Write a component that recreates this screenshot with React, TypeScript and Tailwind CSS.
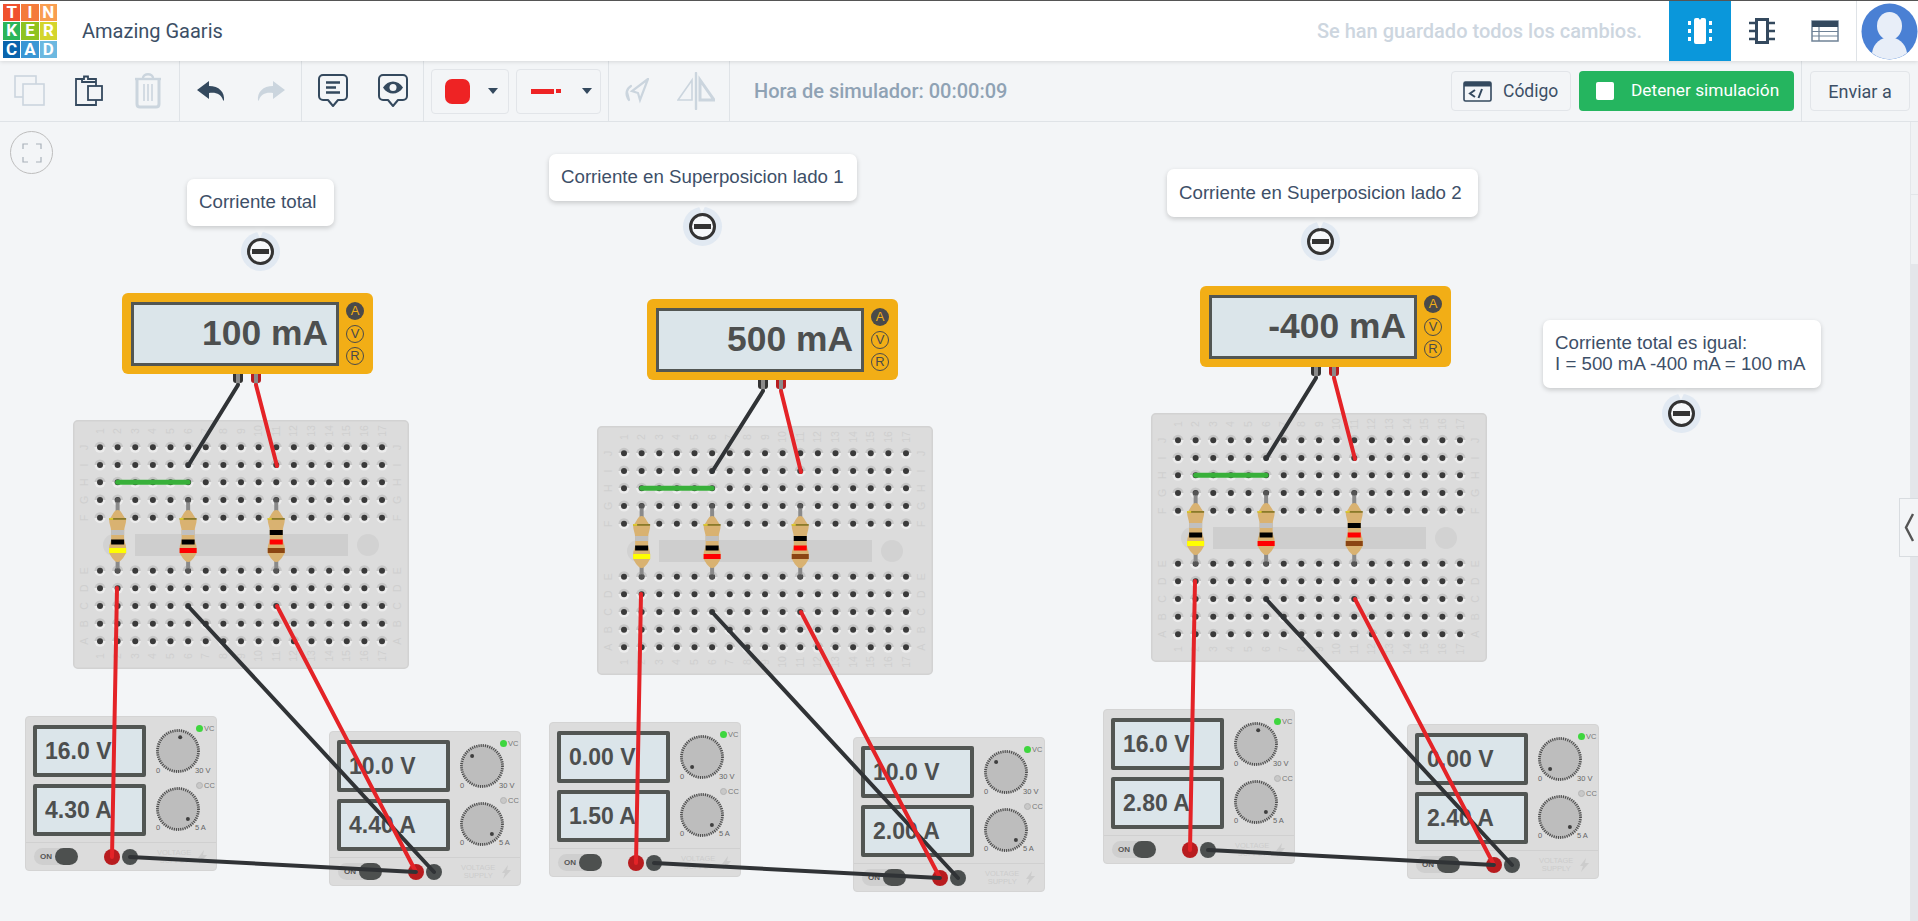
const CANVAS_TOP = 122;
const at = (x: number, y: number) => ({ left: x, top: y - CANVAS_TOP });

const ICON = "#34495e";
const OFF = "#cbd5de";

const LOGO = [
  ["T", "#f0512e"],
  ["I", "#f47b3a"],
  ["N", "#f99e50"],
  ["K", "#2bb559"],
  ["E", "#8fc31f"],
  ["R", "#d4d52c"],
  ["C", "#0a64ad"],
  ["A", "#3a96d4"],
  ["D", "#6cb8e0"],
];

function Logo() {
  return (
    <div className="grid grid-cols-3 gap-px w-[54px] h-[54px]">
      {LOGO.map(([l, c]) => (
        <div
          key={l + c}
          className="flex items-center justify-center text-white font-bold text-[17px] leading-none"
          style={{ background: c }}
        >
          {l}
        </div>
      ))}
    </div>
  );
}

function Bubble({ children }: { children: React.ReactNode }) {
  return (
    <svg width="30" height="34" viewBox="0 0 30 34" fill="none">
      <path
        d="M5 1h20a4 4 0 0 1 4 4v17a4 4 0 0 1-4 4h-5l-5 6-5-6H5a4 4 0 0 1-4-4V5a4 4 0 0 1 4-4z"
        stroke={ICON}
        strokeWidth="2"
        strokeLinejoin="round"
      />
      {children}
    </svg>
  );
}

function Toolbar() {
  return (
    <div className="h-[61px] flex items-stretch border-b border-[#dfe3e7] bg-[#f3f5f7] shrink-0">
      <div className="w-[180px] flex items-center border-r border-[#dfe3e7] shrink-0">
        <div className="w-[60px] flex justify-center">
          <svg width="32" height="32" viewBox="0 0 32 32" fill="none" stroke={OFF} strokeWidth="1.6">
            <rect x="1" y="1" width="21" height="21" />
            <rect x="9" y="9" width="21" height="21" fill="#f3f5f7" />
          </svg>
        </div>
        <div className="w-[58px] flex justify-center">
          <svg width="28" height="32" viewBox="0 0 28 32" fill="none" stroke={ICON} strokeWidth="1.8">
            <path d="M7 4H1v26h20V8" />
            <path d="M7 4h2V1.500h4V4h8v3H7z" />
            <rect x="13" y="11" width="14" height="14" fill="#f3f5f7" />
          </svg>
        </div>
        <div className="w-[62px] flex justify-center">
          <svg width="28" height="36" viewBox="0 0 28 36" fill="none" stroke={OFF} strokeWidth="2.4">
            <path d="M1 6h26" />
            <path d="M9 5c0-5 10-5 10 0" />
            <path d="M3 7v24c0 2 1 3 3 3h16c2 0 3-1 3-3V7" strokeWidth="3" />
            <path d="M10 11v17M14 11v17M18 11v17" strokeWidth="1.6" />
          </svg>
        </div>
      </div>
      <div className="w-[122px] flex items-center border-r border-[#dfe3e7] shrink-0 pl-[1px]">
        <div className="w-[60px] flex justify-center">
          <svg width="28" height="20" viewBox="0 0 28 20" fill={ICON}>
            <path d="M12 0 0 9l12 9v-6c7-1 12 1 14 7l1 1c1-9-5-15-15-15z" />
          </svg>
        </div>
        <div className="w-[60px] flex justify-center">
          <svg width="28" height="20" viewBox="0 0 28 20" fill={OFF}>
            <path d="M16 0l12 9-12 9v-6C9 11 4 13 2 19l-1 1C0 11 6 5 16 5z" />
          </svg>
        </div>
      </div>
      <div className="w-[122px] flex items-center border-r border-[#dfe3e7] shrink-0 pl-[1px]">
        <div className="w-[60px] flex justify-center">
          <Bubble>
            <path d="M8 8.500h14M8 13.500h10M8 18.500h14" stroke={ICON} strokeWidth="2.600" />
          </Bubble>
        </div>
        <div className="w-[60px] flex justify-center">
          <Bubble>
            <path d="M5 13.500c5-8 15-8 20 0-5 8-15 8-20 0z" fill={ICON} />
            <circle cx="15" cy="13.500" r="3.500" fill="#f3f5f7" />
          </Bubble>
        </div>
      </div>
      <div className="w-[185px] flex items-center gap-[7px] pl-[7px] border-r border-[#dfe3e7] shrink-0">
        <div className="w-[78px] h-[45px] border border-[#e2e5e9] rounded-[4px] flex items-center pl-[13px] gap-[18px]">
          <div className="w-[25px] h-[25px] rounded-[7px] bg-[#ee2324]" />
          <div className="w-0 h-0 border-x-[5px] border-x-transparent border-t-[6px] border-t-[#34495e]" />
        </div>
        <div className="w-[85px] h-[45px] border border-[#e2e5e9] rounded-[4px] flex items-center pl-[14px]">
          <div className="w-[23px] h-[5px] bg-[#ee2324]" />
          <div className="w-[5px] h-[4px] bg-[#ee2324] ml-[2px]" />
          <div className="ml-[21px] w-0 h-0 border-x-[5px] border-x-transparent border-t-[6px] border-t-[#34495e]" />
        </div>
      </div>
      <div className="w-[121px] flex items-center border-r border-[#dfe3e7] shrink-0">
        <div className="w-[56px] flex justify-center">
          <svg width="26" height="26" viewBox="0 0 26 26" fill="none" stroke={OFF} strokeWidth="2.200">
            <path d="M25 1 9 13l6 2 2 7z" />
            <path d="M8 8c-5 3-6 9-2 14M4 14l2 8M1 16" strokeLinecap="round" />
          </svg>
        </div>
        <div className="w-[70px] flex justify-center">
          <svg width="38" height="38" viewBox="0 0 38 38" fill="none" stroke={OFF} strokeWidth="1.600">
            <path d="M19 1v36" strokeWidth="2.400" strokeLinecap="round" />
            <path d="M15 8v20H1z" />
            <path d="M23 8v20h14z" strokeWidth="3" />
          </svg>
        </div>
      </div>
      <div className="pl-[24px] flex items-center text-[20px] font-medium text-[#8fa2b4] whitespace-nowrap">
        Hora de simulador: 00:00:09
      </div>
      <div className="flex-1" />
      <div className="flex items-center gap-[8px] pr-[7px] border-r border-[#dfe3e7]">
        <div className="w-[120px] h-[40px] border border-[#e2e5e9] rounded-[4px] flex items-center pl-[11px] gap-[11px] text-[17.500px] text-[#3c4f66]">
          <svg width="29" height="21" viewBox="0 0 29 21" fill="none">
            <rect x="1" y="1" width="27" height="19" rx="1.500" stroke={ICON} strokeWidth="1.600" />
            <rect x="1" y="1" width="27" height="4.500" fill={ICON} />
            <path d="M12 9l-5 3.500 5 3.500M19 8l-3.500 9" stroke={ICON} strokeWidth="2" />
          </svg>
          Código
        </div>
        <div className="w-[215px] h-[40px] rounded-[4px] bg-[#25b55f] flex items-center pl-[17px] gap-[17px] text-[17.300px] text-white whitespace-nowrap">
          <div className="w-[18px] h-[18px] rounded-[2px] bg-white" />
          Detener simulación
        </div>
      </div>
      <div className="w-[116px] flex items-center pl-[8px]">
        <div className="w-[100px] h-[40px] border border-[#e2e5e9] rounded-[4px] flex items-center justify-center text-[18px] text-[#3c4f66]">
          Enviar a
        </div>
      </div>
    </div>
  );
}

function Header() {
  return (
    <div className="relative z-10 h-[61px] border-t border-[#555] bg-white flex items-center shadow-[0_1px_4px_rgba(0,0,0,0.12)] shrink-0">
      <div className="ml-[3px]">
        <Logo />
      </div>
      <div className="ml-[25px] text-[20px] text-[#3c4f66] whitespace-nowrap">Amazing Gaaris</div>
      <div className="flex-1" />
      <div className="text-[20px] font-medium text-[#cdd6df] whitespace-nowrap mr-[27px]">
        Se han guardado todos los cambios.
      </div>
      <div className="w-[62px] h-full bg-[#0a97db] flex items-center justify-center">
        <svg width="26" height="28" viewBox="0 0 26 28" fill="#fff">
          <path d="M7 3a2 2 0 0 1 2-2h2.500l1 1.500h1L14.500 1H17a2 2 0 0 1 2 2v22a2 2 0 0 1-2 2H9a2 2 0 0 1-2-2z" />
          <path d="M1 4h3v4H1zM1 12h3v4H1zM1 20h3v4H1zM22 4h3v4h-3zM22 12h3v4h-3zM22 20h3v4h-3z" />
        </svg>
      </div>
      <div className="w-[62px] h-full flex items-center justify-center">
        <svg width="26" height="26" viewBox="0 0 26 26" fill="none" stroke={ICON}>
          <rect x="7.500" y="1.500" width="11" height="23" strokeWidth="3" />
          <path d="M0 5h6M0 13h6M0 21h6M20 5h6M20 13h6M20 21h6" strokeWidth="2.400" />
        </svg>
      </div>
      <div className="w-[63px] h-full flex items-center justify-center">
        <svg width="28" height="22" viewBox="0 0 28 22" fill="none">
          <rect x="1" y="1" width="26" height="20" stroke="#6f8296" strokeWidth="1.500" />
          <rect x="1" y="1" width="26" height="6" fill={ICON} />
          <path d="M1 11.500h26M1 16h26M8 7v14" stroke="#6f8296" strokeWidth="1.200" />
        </svg>
      </div>
      <div className="h-full w-[62px] border-l border-[#dfe3e7] flex items-center justify-end">
        <svg width="57" height="57" viewBox="0 0 57 57">
          <circle cx="28.500" cy="28.500" r="28" fill="#4a80d4" />
          <ellipse cx="28.500" cy="23" rx="12.500" ry="14" fill="#e8eef8" />
          <path d="M11 50c3-21 32-21 35 0a28 28 0 0 1-35 0z" fill="#e8eef8" />
        </svg>
      </div>
    </div>
  );
}

function Note({
  x,
  y,
  w,
  h,
  mx,
  my,
  lines,
}: {
  x: number;
  y: number;
  w: number;
  h: number;
  mx: number;
  my: number;
  lines: string[];
}) {
  return (
    <>
      <div
        className="absolute w-[39px] h-[39px] rounded-full bg-[#e1e9f2] flex items-center justify-center"
        style={at(mx - 19.5, my - 19.5)}
      >
        <div className="w-[27px] h-[27px] rounded-full border-[3px] border-[#333] flex items-center justify-center bg-[#f6f8fa]">
          <div className="w-[17px] h-[5px] bg-[#333]" />
        </div>
      </div>
      <div
        className="absolute w-0 h-0 border-x-[6px] border-x-transparent border-t-[13px] border-t-[#f4f6f8]"
        style={at(mx - 6, y + h - 1)}
      />
      <div
        className="absolute bg-white rounded-[7px] shadow-[0_2px_5px_rgba(0,0,0,0.18)] flex flex-col justify-center pl-[12px] pb-[2px] text-[18.700px] leading-[21px] text-[#3d4f68] whitespace-nowrap font-['Liberation_Sans',sans-serif]"
        style={{ ...at(x, y), width: w, height: h }}
      >
        {lines.map((l) => (
          <div key={l}>{l}</div>
        ))}
      </div>
    </>
  );
}

function Multimeter({ x, y, value }: { x: number; y: number; value: string }) {
  return (
    <div
      className="absolute w-[251px] h-[92px] font-['Liberation_Sans',sans-serif]"
      style={at(x, y)}
    >
      <div className="w-[251px] h-[81px] bg-[#f2ae16] rounded-[6px] p-[9px] flex gap-[7px]">
        <div className="w-[210px] h-[64px] border-[3.500px] border-[#525653] bg-[#dbe5ea] flex items-center justify-end pr-[8px] text-[35.400px] font-bold text-[#4d4f4f] whitespace-nowrap">
          {value}
        </div>
        <div className="flex flex-col items-center gap-[4px]">
          <div className="w-[18px] h-[18px] rounded-full bg-[#4a4a4a] text-[#f2ae16] text-[13px] flex items-center justify-center">
            A
          </div>
          <div className="w-[18px] h-[18px] mt-[1px] rounded-full border-[1.500px] border-[#4a4a4a] text-[#4a4a4a] text-[13px] flex items-center justify-center">
            V
          </div>
          <div className="w-[18px] h-[18px] rounded-full border-[1.500px] border-[#4a4a4a] text-[#4a4a4a] text-[13px] flex items-center justify-center">
            R
          </div>
        </div>
      </div>
      <div className="flex ml-[111px] gap-[8px]">
        <div className="w-[10px] h-[9px] rounded-b-[3px] bg-[#333]" />
        <div className="w-[10px] h-[9px] rounded-b-[3px] bg-[#b81c1f]" />
      </div>
    </div>
  );
}

const COLS = Array.from({ length: 17 }, (_, i) => 27 + 17.625 * i);
const TOP_ROWS = [27.3, 45, 62.3, 80, 97.7];
const BOTTOM_ROWS = [150.7, 168.3, 186, 203.7, 221.3];
const ROW_LABELS = ["J", "I", "H", "G", "F", "E", "D", "C", "B", "A"];

function Resistor({ col, bands }: { col: number; bands: [string, string, string] }) {
  const cx = COLS[col];
  return (
    <g transform={`translate(${cx} 0)`}>
      <path d="M0 80V151" stroke="#8a8a8a" strokeWidth="4" />
      <circle cy="80" r="2.500" fill="#555" />
      <circle cy="150.700" r="2.500" fill="#555" />
      <path
        d="M0 90c3 0 4 3 6 6l2.500 4c0 4-2 7-2 11v8c0 3 2 5 2 9v5l-3 5c-2 2-3 4-5.500 4s-3.500-2-5.500-4l-3-5v-5c0-4 2-6 2-9v-8c0-4-2-7-2-11l2.500-4c2-3 3-6 6-6z"
        fill="#d9b271"
      />
      <rect x="-8.500" y="98" width="17" height="1.800" fill="#8a7a2a" />
      <rect x="-8.500" y="98" width="4" height="1.800" fill="#e0cc30" />
      <rect x="-6.500" y="110" width="13" height="5" fill={bands[0]} />
      <rect x="-6.500" y="119.500" width="13" height="5" fill={bands[1]} />
      <rect x="-8.500" y="128" width="17" height="5" fill={bands[2]} />
    </g>
  );
}

function Breadboard({ x, y, id }: { x: number; y: number; id: string }) {
  return (
    <svg className="absolute" style={at(x, y)} width="336" height="249" viewBox="0 0 336 249">
      <defs>
        <linearGradient id={id} x1="0" y1="0" x2="0" y2="1">
          <stop offset="0.500" stopColor="#c6c6c6" />
          <stop offset="0.500" stopColor="#ececec" />
        </linearGradient>
      </defs>
      <rect x="0.750" y="0.750" width="334.500" height="247.500" rx="4" fill="#dcdcdc" stroke="#d2d2d2" strokeWidth="1.500" />
      <rect x="62" y="114" width="213" height="22" fill="#cecece" />
      <circle cx="41" cy="125" r="11" fill="#d2d2d2" />
      <circle cx="295" cy="125" r="11" fill="#d2d2d2" />
      {[...TOP_ROWS, ...BOTTOM_ROWS].flatMap((ry) =>
        COLS.map((cx) => (
          <g key={`${cx}-${ry}`}>
            <circle cx={cx} cy={ry} r="5.500" fill={`url(#${id})`} />
            <circle cx={cx} cy={ry} r="3" fill="#3a3a3a" />
          </g>
        )),
      )}
      <g fill="#cfcfcf" fontSize="10.500" textAnchor="middle" fontFamily="'Liberation Sans', sans-serif">
        {COLS.map((cx, i) => (
          <g key={cx}>
            <text transform={`translate(${cx + 3.500} 11) rotate(-90)`}>{i + 1}</text>
            <text transform={`translate(${cx + 3.500} 236) rotate(-90)`}>{i + 1}</text>
          </g>
        ))}
        {[...TOP_ROWS, ...BOTTOM_ROWS].map((ry, i) => (
          <g key={ry}>
            <text transform={`translate(15 ${ry}) rotate(-90)`}>{ROW_LABELS[i]}</text>
            <text transform={`translate(328 ${ry}) rotate(-90)`}>{ROW_LABELS[i]}</text>
          </g>
        ))}
      </g>
      <path d={`M${COLS[1]} 62.300H${COLS[5]}`} stroke="#38b03a" strokeWidth="5" strokeLinecap="round" />
      <Resistor col={1} bands={["#c0c0c0", "#000", "#ffff00"]} />
      <Resistor col={5} bands={["#c0c0c0", "#000", "#ff0000"]} />
      <Resistor col={10} bands={["#000", "#ff0000", "#8b4513"]} />
    </svg>
  );
}

function Knob({ angle, top, maxLabel }: { angle: number; top: boolean; maxLabel: string }) {
  const rad = (angle * Math.PI) / 180;
  const dotX = 24 + 14 * Math.sin(rad);
  const dotY = 24 - 14 * Math.cos(rad);
  return (
    <div className="relative w-[60px] h-[60px]">
      <svg className="absolute left-0 top-0" width="48" height="48" viewBox="0 0 48 48">
        <circle cx="24" cy="24" r="21.500" fill="#bdbdbd" />
        <circle cx="24" cy="24" r="20.500" fill="none" stroke="#4c4c4c" strokeWidth="2.800" strokeDasharray="1.100 1.100" />
        <circle cx={dotX} cy={dotY} r="2" fill="#3f3f3f" />
      </svg>
      <span
        className={`absolute left-[2px] text-[7.500px] leading-none text-[#666] ${top ? "top-[40px]" : "top-[39px]"}`}
      >
        0
      </span>
      <span
        className={`absolute text-[7.500px] leading-none text-[#666] ${top ? "top-[40px] left-[41px]" : "top-[39px] left-[41px]"}`}
      >
        {maxLabel}
      </span>
      <span
        className={`absolute left-[42px] w-[7px] h-[7px] rounded-full ${top ? "top-[-2px] bg-[#3ed63e]" : "top-[-3px] bg-[#c8c8c8] border border-[#b5b5b5]"}`}
      />
      <span
        className={`absolute left-[50px] text-[7.500px] leading-none text-[#777] ${top ? "top-[-2px]" : "top-[-3px]"}`}
      >
        {top ? "VC" : "CC"}
      </span>
    </div>
  );
}

function SupplyDisplay({ value }: { value: string }) {
  return (
    <div className="w-[113px] h-[52px] rounded-[2px] border-[4px] border-[#525653] bg-[#dbe5ea] flex items-center pl-[8px] text-[23px] font-bold text-[#4d4f4f] whitespace-nowrap">
      {value}
    </div>
  );
}

function Supply({
  x,
  y,
  volts,
  amps,
}: {
  x: number;
  y: number;
  volts: string;
  amps: string;
}) {
  const angle = -135 + (270 * parseFloat(volts)) / 30;
  return (
    <div
      className="absolute w-[192px] h-[155px] bg-[#dcdcdc] border border-[#d4d4d4] rounded-[4px] font-['Liberation_Sans',sans-serif] flex flex-col"
      style={at(x, y)}
    >
      <div className="h-[126px] flex pl-[7px] pt-[8px] gap-[8px] border-b-[1.500px] border-[#d0d0d0]">
        <div className="flex flex-col gap-[7px]">
          <SupplyDisplay value={volts} />
          <SupplyDisplay value={amps} />
        </div>
        <div className="flex flex-col pt-[2px]">
          <Knob angle={angle} top maxLabel="30 V" />
          <Knob angle={135} top={false} maxLabel="5 A" />
        </div>
      </div>
      <div className="flex-1 relative flex items-center pl-[8px]">
        <div className="w-[44px] h-[17px] rounded-full bg-[#cfcfcf] flex items-center justify-between pl-[6px]">
          <span className="text-[8px] font-bold text-[#555]">ON</span>
          <div className="w-[23px] h-[17px] rounded-full bg-[#4d504f]" />
        </div>
        <div className="ml-[26px] w-[16px] h-[16px] rounded-full bg-[#b81c1f]" />
        <div className="ml-[2px] w-[16px] h-[16px] rounded-full bg-[#4b4f4f]" />
        <div className="ml-[19px] text-[7.500px] leading-[8px] text-center text-[#cccccc]">
          VOLTAGE
          <br />
          SUPPLY
        </div>
        <svg className="ml-[7px]" width="9" height="14" viewBox="0 0 9 14" fill="#cccccc">
          <path d="M6 0 0 8h3l-2 6 8-9H5z" />
        </svg>
      </div>
    </div>
  );
}

interface Circuit {
  mm: [number, number];
  bb: [number, number];
  a: [number, number];
  b: [number, number];
  value: string;
  aV: string;
  aA: string;
  bV: string;
  bA: string;
}

const CIRCUITS: Circuit[] = [
  { mm: [122, 293], bb: [73, 420], a: [25, 716], b: [329, 731], value: "100 mA", aV: "16.0 V", aA: "4.30 A", bV: "10.0 V", bA: "4.40 A" },
  { mm: [647, 299], bb: [597, 426], a: [549, 722], b: [853, 737], value: "500 mA", aV: "0.00 V", aA: "1.50 A", bV: "10.0 V", bA: "2.00 A" },
  { mm: [1200, 286], bb: [1151, 413], a: [1103, 709], b: [1407, 724], value: "-400 mA", aV: "16.0 V", aA: "2.80 A", bV: "0.00 V", bA: "2.40 A" },
];

const RED = "#e42327";
const BLACK = "#303336";

function Wires({ c }: { c: Circuit }) {
  const [mx, my] = c.mm;
  const [bx, by] = c.bb;
  const [ax, ay] = c.a;
  const [sx, sy] = c.b;
  const wires: [number, number, number, number, string][] = [
    [mx + 116, my + 92, bx + 115, by + 46, BLACK],
    [mx + 134, my + 92, bx + 204, by + 46, RED],
    [bx + 44, by + 168, ax + 87, ay + 141, RED],
    [bx + 115, by + 186, sx + 105, sy + 141, BLACK],
    [bx + 204, by + 186, sx + 87, sy + 141, RED],
    [ax + 105, ay + 141, sx + 87, sy + 141, BLACK],
  ];
  return (
    <>
      <path d={`M${mx + 116} ${my + 81}V${my + 92}M${mx + 134} ${my + 81}V${my + 92}`} stroke="#8a8a8a" strokeWidth="4" />
      {wires.map(([x1, y1, x2, y2, color]) => (
        <line key={`${x1}-${y1}-${x2}`} x1={x1} y1={y1} x2={x2} y2={y2} stroke={color} strokeWidth="4" strokeLinecap="round" />
      ))}
    </>
  );
}

export default function App() {
  return (
    <div className="h-screen w-full overflow-hidden flex flex-col bg-[#f3f5f7] font-['Roboto',sans-serif]">
      <Header />
      <Toolbar />
      <div className="relative flex-1 overflow-hidden">
        {/* right rail */}
        <div className="absolute right-0 top-0 bottom-0 w-[8px] border-l border-[#e4e7ea] bg-[#f0f2f4]">
          <div className="absolute left-0 right-0 top-[72px] h-[70px] border-t border-[#e2e5e8]" />
          <div className="absolute left-0 right-0 top-[142px] bottom-0 bg-[#e4e6ea]" />
        </div>
        <div className="absolute right-0 top-[376px] w-[19px] h-[59px] bg-[#f3f5f7] border border-[#d8dce0] border-r-0 flex items-center justify-center">
          <svg width="11" height="29" viewBox="0 0 11 29" fill="none" stroke="#555" strokeWidth="2.400">
            <path d="M9 1 2 14.500 9 28" />
          </svg>
        </div>
        <div className="absolute left-[10px] top-[9px] w-[43px] h-[43px] rounded-full border border-[#bdbdbd] flex items-center justify-center">
          <svg width="20" height="20" viewBox="0 0 20 20" fill="none" stroke="#a9b1b9" strokeWidth="1.200">
            <path d="M1 6V1h5M14 1h5v5M19 14v5h-5M6 19H1v-5" />
          </svg>
        </div>

        <Note x={187} y={179} w={147} h={47} mx={260} my={251} lines={["Corriente total"]} />
        <Note x={549} y={154} w={308} h={47} mx={702} my={226} lines={["Corriente en Superposicion lado 1"]} />
        <Note x={1167} y={169} w={311} h={48} mx={1320} my={241} lines={["Corriente en Superposicion lado 2"]} />
        <Note
          x={1543}
          y={320}
          w={278}
          h={68}
          mx={1681}
          my={413}
          lines={["Corriente total es igual:", "I = 500 mA -400 mA = 100 mA"]}
        />

        {CIRCUITS.map((c, i) => (
          <div key={c.value}>
            <Multimeter x={c.mm[0]} y={c.mm[1]} value={c.value} />
            <Breadboard x={c.bb[0]} y={c.bb[1]} id={`halo${i}`} />
            <Supply x={c.a[0]} y={c.a[1]} volts={c.aV} amps={c.aA} />
            <Supply x={c.b[0]} y={c.b[1]} volts={c.bV} amps={c.bA} />
          </div>
        ))}
        <svg className="absolute left-0 top-0 pointer-events-none" width="1918" height="799" viewBox="0 122 1918 799">
          {CIRCUITS.map((c) => (
            <Wires key={c.value} c={c} />
          ))}
        </svg>
      </div>
    </div>
  );
}
